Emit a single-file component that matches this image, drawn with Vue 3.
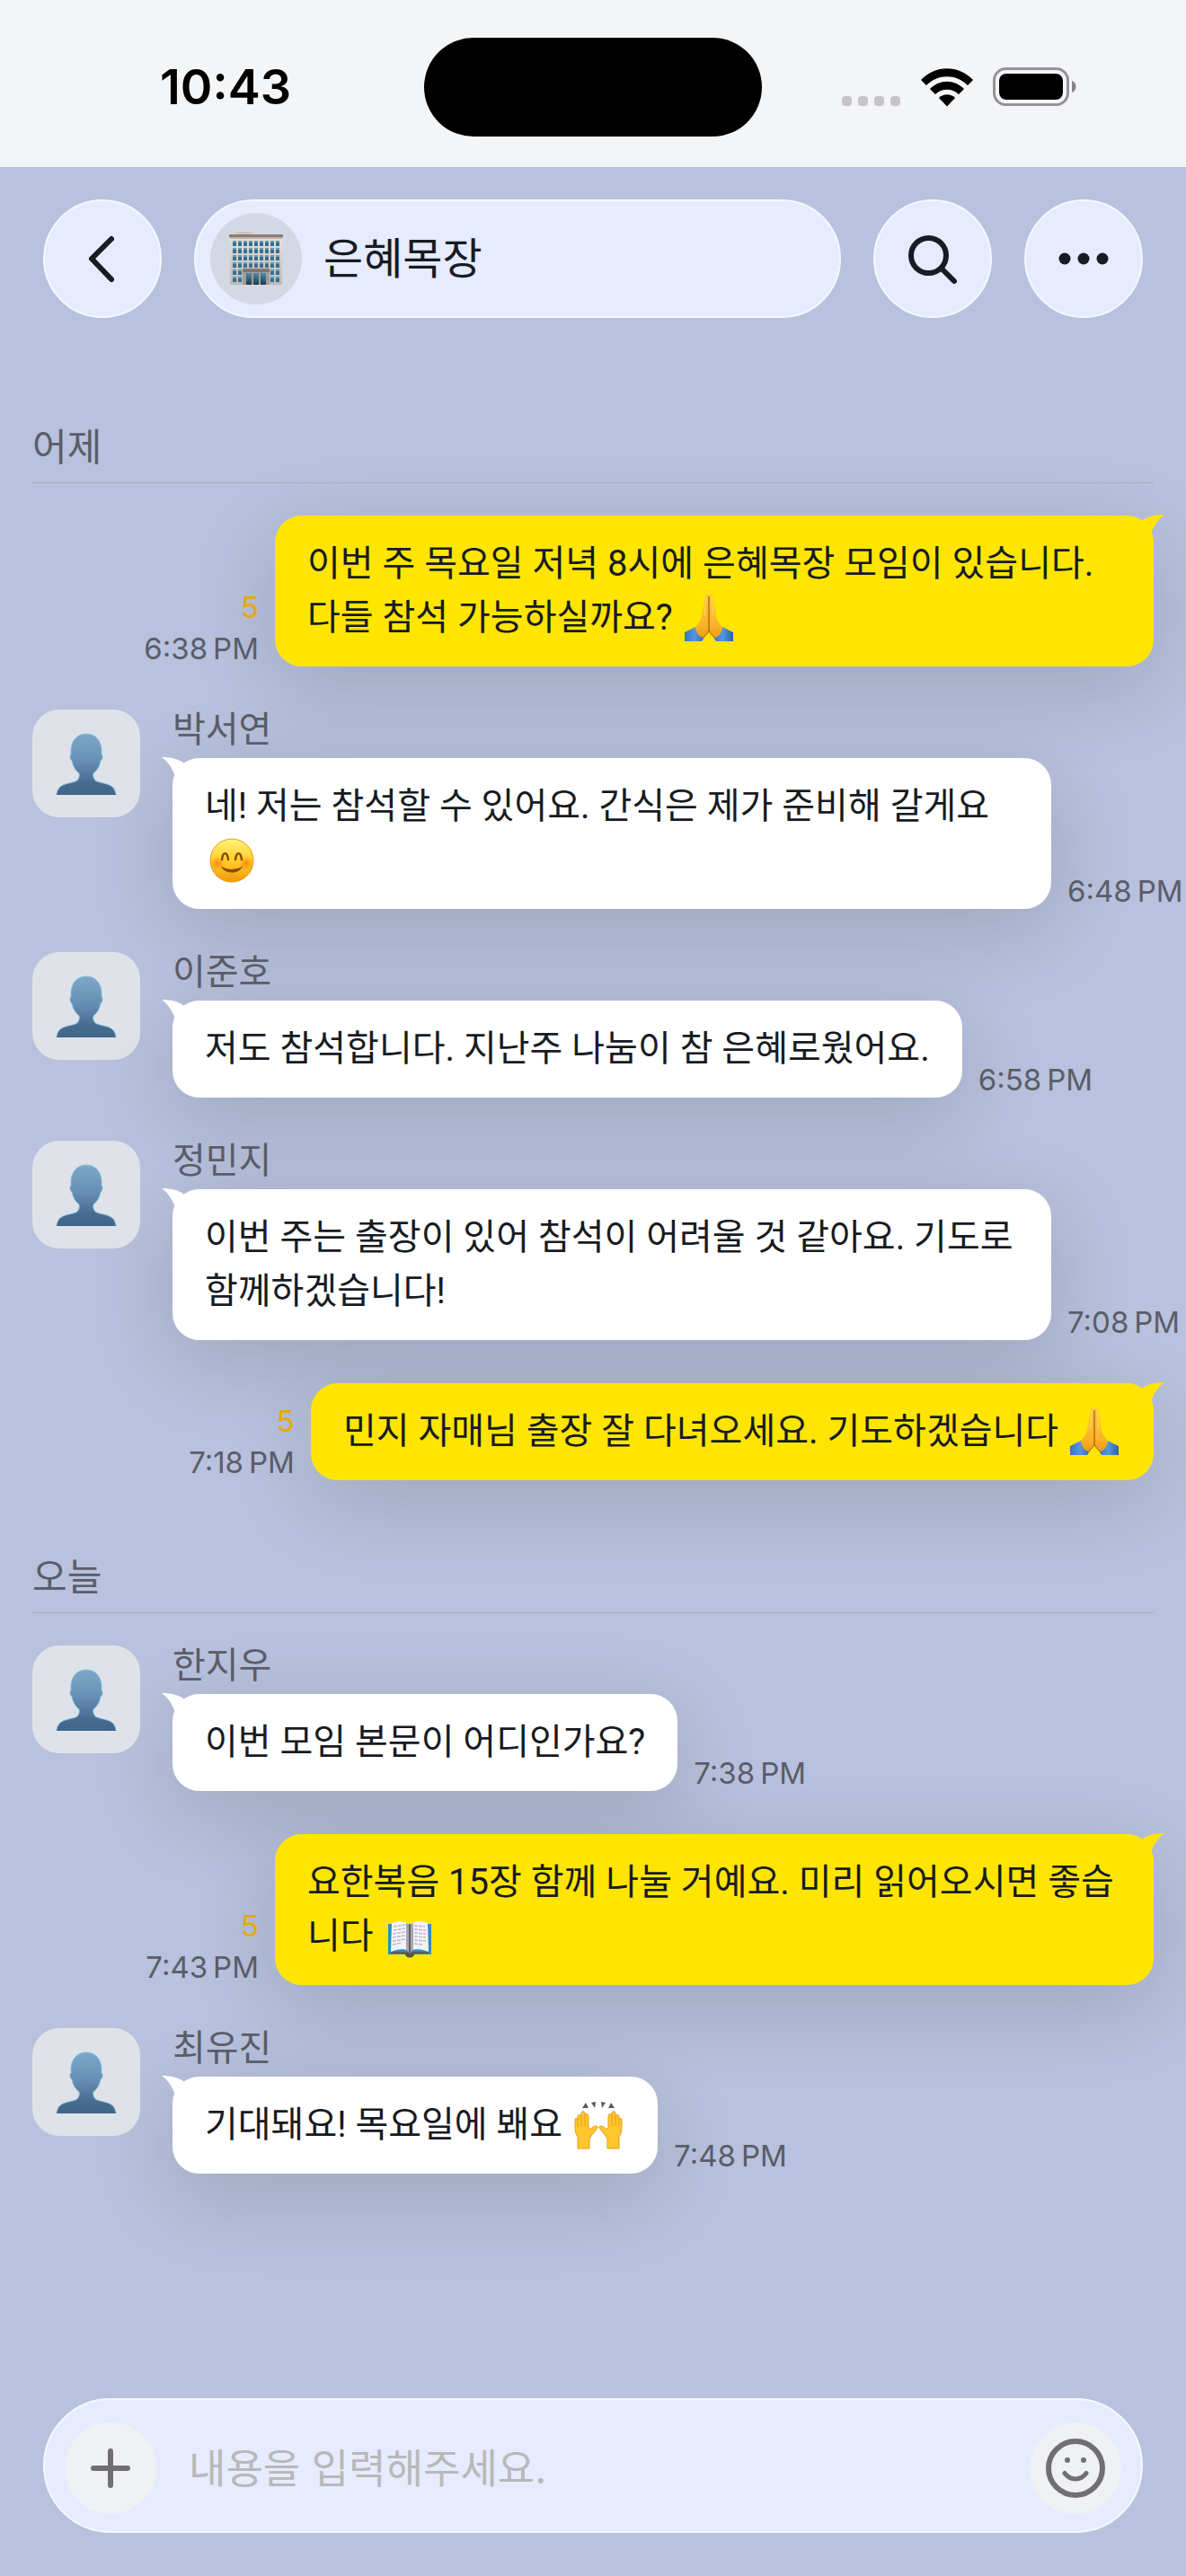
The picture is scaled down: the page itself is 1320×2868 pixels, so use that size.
<script setup>
import { ref } from 'vue'

const draft = ref('')

const sections = ref([
  {
    label: '어제',
    messages: [
      { id: 1, mine: true, text: '이번 주 목요일 저녁 8시에 은혜목장 모임이 있습니다. 다들 참석 가능하실까요?', emoji: 'pray', time: '6:38', unread: 5 },
      { id: 2, name: '박서연', text: '네! 저는 참석할 수 있어요. 간식은 제가 준비해 갈게요', emoji: 'smile', time: '6:48' },
      { id: 3, name: '이준호', text: '저도 참석합니다. 지난주 나눔이 참 은혜로웠어요.', time: '6:58' },
      { id: 4, name: '정민지', text: '이번 주는 출장이 있어 참석이 어려울 것 같아요. 기도로 함께하겠습니다!', time: '7:08' },
      { id: 5, mine: true, text: '민지 자매님 출장 잘 다녀오세요. 기도하겠습니다', emoji: 'pray', time: '7:18', unread: 5 }
    ]
  },
  {
    label: '오늘',
    messages: [
      { id: 6, name: '한지우', text: '이번 모임 본문이 어디인가요?', time: '7:38' },
      { id: 7, mine: true, text: '요한복음 15장 함께 나눌 거예요. 미리 읽어오시면 좋습니다', emoji: 'book', time: '7:43', unread: 5 },
      { id: 8, name: '최유진', text: '기대돼요! 목요일에 봬요', emoji: 'hands', time: '7:48' }
    ]
  }
])

const send = () => {
  if (!draft.value.trim()) return
  sections.value[sections.value.length - 1].messages.push({
    id: Date.now(),
    mine: true,
    text: draft.value,
    time: '10:43'
  })
  draft.value = ''
}
</script>

<template>
  <div class="chat-app">
    <!-- Shared drawings -->
    <svg class="sprite" width="0" height="0" aria-hidden="true">
      <defs>
        <linearGradient id="g-person" x1="0" y1="0" x2="0" y2="1">
          <stop offset="0" stop-color="#7ea8ca" />
          <stop offset="0.45" stop-color="#668fb5" />
          <stop offset="0.8" stop-color="#486b92" />
          <stop offset="1" stop-color="#426489" />
        </linearGradient>
        <linearGradient id="g-hand" x1="0" y1="0" x2="0" y2="1">
          <stop offset="0" stop-color="#ffc83c" />
          <stop offset="0.7" stop-color="#fab32a" />
          <stop offset="1" stop-color="#ee9a18" />
        </linearGradient>
        <linearGradient id="g-sleeve" x1="0" y1="0" x2="1" y2="0">
          <stop offset="0" stop-color="#3a74c0" />
          <stop offset="0.5" stop-color="#5596e0" />
          <stop offset="1" stop-color="#2c62a8" />
        </linearGradient>
        <linearGradient id="g-face" x1="0" y1="0" x2="0" y2="1">
          <stop offset="0" stop-color="#fff27a" />
          <stop offset="0.5" stop-color="#ffcf2b" />
          <stop offset="1" stop-color="#f09a0a" />
        </linearGradient>
        <radialGradient id="g-cheek">
          <stop offset="0" stop-color="#ff7a10" stop-opacity="0.85" />
          <stop offset="1" stop-color="#ff8a10" stop-opacity="0" />
        </radialGradient>
        <linearGradient id="g-wall" x1="0" y1="0" x2="0" y2="1">
          <stop offset="0" stop-color="#e9dfd5" />
          <stop offset="1" stop-color="#bdb9b6" />
        </linearGradient>
        <linearGradient id="g-glass" x1="0" y1="0" x2="0" y2="1">
          <stop offset="0" stop-color="#4e8cad" />
          <stop offset="1" stop-color="#1c3a4a" />
        </linearGradient>
        <pattern id="p-windows" x="3" y="9" width="6" height="8" patternUnits="userSpaceOnUse">
          <rect x="1" y="1" width="4" height="6" fill="#356f90" />
          <rect x="1" y="1" width="4" height="2" fill="#5f9ab8" />
        </pattern>
      </defs>
      <symbol id="person" viewBox="0 0 68 69">
        <path
          d="M34 1C24 1 18 8 17 18C17 21 17 23 17 24C15 25 16 30 18 31C19 37 22 42 26 45C27 49 25 53 22 54C14 57 2 56 1 69H67C66 56 54 57 46 54C43 53 41 49 42 45C46 42 49 37 50 31C52 30 53 25 51 24C51 23 51 21 51 18C50 8 44 1 34 1Z"
          fill="url(#g-person)"
          stroke="#85c3dc"
          stroke-width="1"
        />
        <path d="M1 68.500H67" stroke="#426489" stroke-width="1" />
      </symbol>
      <symbol id="building" viewBox="0 0 60 60">
        <rect x="7" y="0" width="19" height="5" fill="#cfc4bb" />
        <rect x="1" y="7" width="58" height="52" fill="url(#g-wall)" />
        <rect x="0" y="3" width="60" height="3" fill="#8a7d76" />
        <rect x="1" y="6" width="58" height="2" fill="#bfb2a8" />
        <rect x="3" y="9" width="54" height="48" fill="url(#p-windows)" />
        <rect x="15" y="41" width="30" height="18" fill="#a39c98" />
        <rect x="15" y="41" width="30" height="4" fill="#81756f" />
        <rect x="19" y="46" width="6" height="13" fill="url(#g-glass)" />
        <rect x="27" y="46" width="6" height="13" fill="url(#g-glass)" />
        <rect x="35" y="46" width="6" height="13" fill="url(#g-glass)" />
      </symbol>
      <symbol id="pray" viewBox="0 0 54 54">
        <path d="M0 43L12 37L23 47L19 53H0Z" fill="url(#g-sleeve)" />
        <path d="M54 43L42 37L31 47L35 53H54Z" fill="url(#g-sleeve)" />
        <path
          d="M23 2C24 0 26 1 27 2V43C25 46 23 48 21 49C16 48 13 44 12 38C14 34 18 31 19 25Z"
          fill="url(#g-hand)"
        />
        <path
          d="M31 2C30 0 28 1 27 2V43C29 46 31 48 33 49C38 48 41 44 42 38C40 34 36 31 35 25Z"
          fill="url(#g-hand)"
        />
        <path d="M27 3V43" stroke="#b96f10" stroke-width="1.500" />
        <path d="M24 4L22 24M30 4L32 24" stroke="#ffdc6e" stroke-width="1" />
        <path d="M21 48C24 46 26 43 27 41C28 43 30 46 33 48" fill="none" stroke="#b96f10" stroke-width="1" />
      </symbol>
      <symbol id="smile" viewBox="0 0 54 54">
        <circle cx="27" cy="27" r="24" fill="url(#g-face)" stroke="#e99a17" stroke-width="1" />
        <circle cx="11" cy="30" r="8" fill="url(#g-cheek)" />
        <circle cx="43" cy="30" r="8" fill="url(#g-cheek)" />
        <path
          d="M16 26C17 17 22 17 23 26M31 26C32 17 37 17 38 26"
          fill="none"
          stroke="#8a4b08"
          stroke-width="2.500"
          stroke-linecap="round"
        />
        <path d="M15 33C20 38 34 38 39 33C36 43 18 43 15 33Z" fill="#8a4b08" />
      </symbol>
      <symbol id="book" viewBox="0 0 54 54">
        <path d="M3 13H51V47H31L27 50L23 47H3Z" fill="#2c8dbc" />
        <path d="M6 44H48V46H31L27 48L23 46H6Z" fill="#5c5b5e" />
        <path d="M7 12C14 9 22 10 26 13V43C20 40 13 41 6 44Z" fill="#f3f3f8" />
        <path d="M47 12C40 9 32 10 28 13V43C34 40 41 41 48 44Z" fill="#f3f3f8" />
        <path d="M23 12L27 14L31 12V42L27 45L23 42Z" fill="#a6a6ae" />
        <path d="M27 13V44" stroke="#606068" stroke-width="2" />
        <path
          d="M9 16L22 14M9 20L22 18M8 24L22 22M8 28L22 26M8 32L22 30M8 36L18 34M32 15L44 16M32 19L45 20M32 23L45 24M32 27L45 28M32 31L45 32M32 35L42 36"
          stroke="#b9b9c4"
          stroke-width="1.500"
          stroke-dasharray="4 1"
        />
        <path d="M23 46C24 50 30 50 31 46" fill="none" stroke="#455a34" stroke-width="3" />
      </symbol>
      <symbol id="hands" viewBox="0 0 54 54">
        <path d="M9 8L13 2L16 8ZM19 2L24 1L23 8ZM30 1L35 2L31 8ZM38 8L41 2L45 8Z" fill="#59595c" />
        <path
          d="M4 53V40C1 36 1 31 1 26V21C1 19 4 19 4 21V17C4 15 8 15 8 17V14C8 11 12 11 12 14V16C12 14 16 14 16 17V30C18 32 19 31 21 29C23 27 27 28 26 30L19 39C18 41 17 42 17 44V53Z"
          fill="#ffc62e"
          stroke="#e69d16"
          stroke-width="1"
        />
        <path
          d="M50 53V40C53 36 53 31 53 26V21C53 19 50 19 50 21V17C50 15 46 15 46 17V14C46 11 42 11 42 14V16C42 14 38 14 38 17V30C36 32 35 31 33 29C31 27 27 28 28 30L35 39C36 41 37 42 37 44V53Z"
          fill="#ffc62e"
          stroke="#e69d16"
          stroke-width="1"
        />
        <path d="M4 20V29M8 17V28M12 16V28M50 20V29M46 17V28M42 16V28" stroke="#e69d16" stroke-width="1" />
      </symbol>
    </svg>

    <div class="status-bar">
      <span class="clock">10:43</span>
      <span class="island"></span>
      <div class="status-icons">
        <svg width="66" height="12" viewBox="0 0 66 12" fill="#c5c5c7">
          <rect x="0" y="0" width="11" height="11" rx="4" />
          <rect x="18" y="0" width="11" height="11" rx="4" />
          <rect x="36" y="0" width="11" height="11" rx="4" />
          <rect x="54" y="0" width="11" height="11" rx="4" />
        </svg>
        <svg width="58" height="43" viewBox="0 0 58 43">
          <path d="M0 13C16 -4 42 -4 58 13L52 19C39 6 19 6 6 19Z" />
          <path d="M10 23C21 12 37 12 48 23L42 29C35 22 23 22 16 29Z" />
          <path d="M20 33C25 28 33 28 38 33L29 42.500Z" />
        </svg>
        <svg width="94" height="44" viewBox="0 0 94 44">
          <rect x="1.500" y="1.500" width="82" height="40" rx="13" fill="none" stroke="#939395" stroke-width="3" />
          <rect x="7" y="7" width="71" height="29" rx="8" />
          <path d="M88 15C94 17 94 26 88 28Z" fill="#858587" />
        </svg>
      </div>
    </div>

    <header class="header">
      <button class="glass round" type="button" aria-label="뒤로">
        <svg width="60" height="60" viewBox="0 0 60 60">
          <path d="M40 8L18 30L40 53" fill="none" stroke="#171b22" stroke-width="6" stroke-linecap="round" stroke-linejoin="round" />
        </svg>
      </button>
      <div class="glass room">
        <span class="room-avatar">
          <svg width="60" height="60"><use href="#building" /></svg>
        </span>
        <h1>은혜목장</h1>
      </div>
      <button class="glass round" type="button" aria-label="검색">
        <svg width="60" height="60" viewBox="0 0 60 60" fill="none" stroke="#171b22" stroke-width="6" stroke-linecap="round">
          <circle cx="25.500" cy="26.500" r="19.500" />
          <path d="M40 41L54 55" />
        </svg>
      </button>
      <button class="glass round" type="button" aria-label="더보기">
        <svg width="60" height="60" viewBox="0 0 60 60" fill="#171b22">
          <circle cx="9" cy="30" r="6.500" />
          <circle cx="30" cy="30" r="6.500" />
          <circle cx="51" cy="30" r="6.500" />
        </svg>
      </button>
    </header>

    <main class="messages">
      <section v-for="section in sections" :key="section.label" class="day">
        <h2>{{ section.label }}</h2>
        <article v-for="msg in section.messages" :key="msg.id" class="message" :class="{ mine: msg.mine }">
          <div v-if="!msg.mine" class="avatar">
            <svg width="68" height="69"><use href="#person" /></svg>
          </div>
          <div class="content">
            <div v-if="!msg.mine" class="name">{{ msg.name }}</div>
            <div class="line">
              <p class="bubble">
                <svg class="tail" width="36" height="20" viewBox="0 0 36 20" aria-hidden="true">
                  <path d="M12 6C18 2 26 0 36 0C30 4 25 11 22 19L10 19Z" />
                </svg>
                {{ msg.text }}
                <svg v-if="msg.emoji" class="emoji" width="54" height="54"><use :href="'#' + msg.emoji" /></svg>
              </p>
              <div class="meta">
                <span v-if="msg.unread" class="unread">{{ msg.unread }}</span>
                <time>{{ msg.time }}&#8239;PM</time>
              </div>
            </div>
          </div>
        </article>
      </section>
    </main>

    <form class="glass composer" @submit.prevent="send">
      <button class="tool" type="button" aria-label="첨부">
        <svg width="44" height="44" viewBox="0 0 44 44">
          <path d="M22 3V41M3 22H41" stroke="#6f6f74" stroke-width="6" stroke-linecap="round" />
        </svg>
      </button>
      <input v-model="draft" type="text" aria-label="메시지" placeholder="내용을 입력해주세요." />
      <button class="tool" type="button" aria-label="이모티콘">
        <svg width="66" height="66" viewBox="0 0 66 66" fill="none" stroke="#6f6f74" stroke-width="6" stroke-linecap="round">
          <circle cx="33" cy="33" r="30" />
          <path d="M21 38.500C27 47 39 47 45 38.500" stroke-width="5" />
          <circle cx="24" cy="24" r="3" fill="#6f6f74" stroke="none" />
          <circle cx="42" cy="24" r="3" fill="#6f6f74" stroke="none" />
        </svg>
      </button>
    </form>
  </div>
</template>

<style>
* {
  box-sizing: border-box;
}

body {
  margin: 0;
  background-color: #b8c1dd;
}
</style>

<style scoped>
.chat-app {
  display: flex;
  flex-direction: column;
  min-height: 100vh;
  overflow-x: hidden;
  background-color: #b8c1dd;
  color: #171b22;
  font-family: Inter, "Noto Sans CJK KR", sans-serif;
  font-size: 40px;
  line-height: 60px;
}

.sprite {
  position: absolute;
}

svg {
  display: block;
}

h1, h2, p {
  margin: 0;
  font-weight: 400;
}

.status-bar {
  display: grid;
  grid-template-columns: 1fr 376px 1fr;
  align-items: center;
  height: 186px;
  padding-top: 8px;
  background-color: #f4f5f7;
}

.clock {
  padding-left: 178px;
  color: #000;
  font-size: 54px;
  font-weight: 600;
}

.island {
  height: 110px;
  border-radius: 55px;
  background-color: #000;
}

.status-icons {
  display: flex;
  justify-content: flex-end;
  align-items: flex-end;
  gap: 22px;
  padding-right: 121px;
}

.glass {
  border: 2px solid #f3f8ff;
  background-color: #e6ebff;
}

.header {
  display: flex;
  gap: 36px;
  padding: 36px 48px 0;
}

.round {
  display: flex;
  justify-content: center;
  align-items: center;
  flex: none;
  width: 132px;
  height: 132px;
  padding: 0;
  border-radius: 50%;
  cursor: pointer;
}

.room {
  display: flex;
  align-items: center;
  flex: 1;
  gap: 24px;
  padding-left: 16px;
  border-radius: 66px;
}

.room-avatar {
  display: flex;
  justify-content: center;
  align-items: center;
  width: 102px;
  height: 102px;
  border-radius: 50%;
  background-color: #d3d8e5;
}

.room h1 {
  font-size: 48px;
}

.messages {
  isolation: isolate;
  display: flex;
  flex-direction: column;
  gap: 48px;
  padding: 84px 36px 96px;
}

.day {
  display: flex;
  flex-direction: column;
  gap: 48px;
  padding-top: 30px;
}

.day h2 {
  margin-bottom: -12px;
  padding-bottom: 9px;
  border-bottom: 1px solid #a9adbb;
  color: #5a5d68;
  font-size: 42px;
}

.message {
  display: flex;
  gap: 36px;
}

.mine {
  justify-content: flex-end;
}

.avatar {
  display: flex;
  justify-content: center;
  align-items: center;
  flex: none;
  width: 120px;
  height: 120px;
  border-radius: 30px;
  background-color: rgba(240, 241, 238, 0.7);
}

.name {
  height: 54px;
  color: #5a5d68;
  line-height: 44px;
}

.line {
  display: flex;
  align-items: flex-end;
  gap: 18px;
}

.mine .line {
  flex-direction: row-reverse;
}

.bubble {
  --bubble-color: #fff;
  position: relative;
  flex: none;
  max-width: calc(100vw - 342px);
  padding: 24px 36px;
  border-radius: 30px;
  background-color: var(--bubble-color);
  font-family: Roboto, "Noto Sans CJK KR", sans-serif;
}

.mine .bubble {
  --bubble-color: #ffe500;
}

/* Shadow sits behind every bubble in the list */
.bubble::before {
  content: "";
  position: absolute;
  inset: 0;
  z-index: -1;
  border-radius: 30px;
  box-shadow: 0 24px 96px rgba(0, 0, 0, 0.15);
}

.tail {
  position: absolute;
  top: -1px;
  left: -12px;
  transform: scaleX(-1);
  fill: var(--bubble-color);
}

.mine .tail {
  right: -12px;
  left: auto;
  transform: none;
}

.emoji {
  display: inline-block;
  margin: 0 3px;
  vertical-align: -14px;
}

.meta {
  display: flex;
  flex-direction: column;
  gap: 6px;
  flex: none;
  color: #5a5d68;
  font-size: 33px;
  line-height: 40px;
  white-space: nowrap;
}

.mine .meta {
  align-items: flex-end;
}

.unread {
  color: #e8a900;
}

.composer {
  display: flex;
  align-items: center;
  gap: 36px;
  margin: auto 48px 48px;
  padding: 25px 22px 19px;
  border-radius: 75px;
}

.tool {
  display: flex;
  justify-content: center;
  align-items: center;
  flex: none;
  width: 102px;
  height: 102px;
  padding: 0;
  border: none;
  border-radius: 50%;
  background-color: #f0f1f3;
  cursor: pointer;
}

.composer input {
  flex: 1;
  min-width: 0;
  padding: 0;
  border: none;
  outline: none;
  background: transparent;
  color: #171b22;
  font-family: inherit;
  font-size: 45px;
}

.composer input::placeholder {
  color: #b8b8b8;
}
</style>
